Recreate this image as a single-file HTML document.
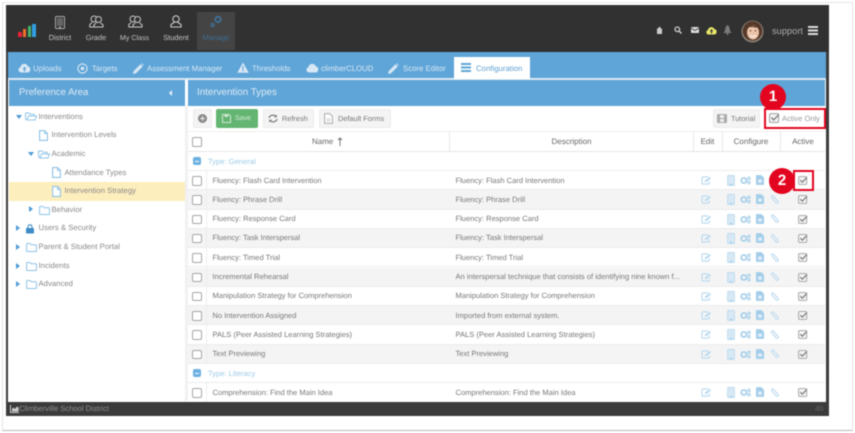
<!DOCTYPE html>
<html><head><meta charset="utf-8">
<style>
html,body{margin:0;padding:0;background:#fff}
body{width:855px;height:433px;position:relative;overflow:hidden;font-family:"Liberation Sans",sans-serif;text-rendering:geometricPrecision}
#wrap{position:absolute;left:0;top:0;width:855px;height:433px;filter:blur(.4px)}
.a,.t,svg.i{position:absolute}
.t{white-space:nowrap;font-size:7.55px;color:#777;line-height:12px}
.ctr{text-align:center}
.row{position:absolute;left:188px;width:637px;height:19.3px;box-sizing:border-box;border-bottom:1px solid #ececec}
.g{background:#f4f4f4}
.cb{position:absolute;width:7.5px;height:7.5px;border:1px solid #a5a5a5;border-radius:2px;background:#fff}
.nav{color:#c4c4c4;font-size:7.4px}
.tab{color:#d8e8f4;font-size:7.8px}
.tree{color:#8a8a8a;font-size:7.75px}
.th{color:#666;font-size:8px}
.bt{font-size:7.35px}
.btn{position:absolute;background:#f4f4f4;border:1px solid #ececec;border-radius:2px;box-sizing:border-box;top:109px;height:19px}
</style></head><body>
<svg width="0" height="0" style="position:absolute">
<defs>
<symbol id="edit" viewBox="0 0 12 10"><path d="M8 1H2a1 1 0 0 0-1 1v6a1 1 0 0 0 1 1h6a1 1 0 0 0 1-1V6" fill="none" stroke="#b8d9ef" stroke-width="1.2"/><path d="M4 7l.4-2L9.500 1l1.500 1.500L6 6.600z" fill="#b8d9ef"/></symbol>
<symbol id="tab" viewBox="0 0 9 13"><rect x=".5" y=".5" width="8" height="12" rx="1" fill="#d8e9f5" stroke="#b8d9ef"/><rect x="3.500" y="10.500" width="2" height="1" fill="#7fb6dc"/></symbol>
<symbol id="cog" viewBox="0 0 13 10"><circle cx="4.500" cy="5" r="3" fill="none" stroke="#a3cde9" stroke-width="2"/><circle cx="10.500" cy="2.500" r="1.500" fill="none" stroke="#a3cde9" stroke-width="1.200"/><circle cx="10.500" cy="7.500" r="1.500" fill="none" stroke="#a3cde9" stroke-width="1.200"/></symbol>
<symbol id="doc" viewBox="0 0 9 11"><path d="M0 0h6l3 3v8H0z" fill="#a3cde9"/><rect x="2.500" y="5" width="4" height="3.500" fill="#e4f0f9"/></symbol>
<symbol id="clip" viewBox="0 0 10 11"><path d="M2 3l5 6a1.500 1.500 0 0 0 2-2L4 1.500A1 1 0 0 0 2 3" fill="none" stroke="#c6dff1" stroke-width="1.500"/></symbol>
<symbol id="chk" viewBox="0 0 11 10"><rect x=".6" y=".6" width="9" height="8.800" rx="1.200" fill="#f4f4f4" stroke="#a0a0a0" stroke-width="1"/><path d="M2.500 4.500l2.200 2.400L9.800 1.600" fill="none" stroke="#7c7c7c" stroke-width="1.300"/></symbol>
<symbol id="file" viewBox="0 0 9 11"><path d="M.6.6h5l2.800 2.800v7H.6z" fill="#fff" stroke="#8fc3e6" stroke-width="1.100"/><path d="M5.500.6v3h3" fill="none" stroke="#8fc3e6" stroke-width=".9"/></symbol>
<symbol id="open" viewBox="0 0 12 9"><path d="M2 8L.6 7V1h3.500l1 1.300h4V4M2 8l1.500-4h8L10 8z" fill="#fff" stroke="#8fc3e6" stroke-width="1"/></symbol>
<symbol id="fold" viewBox="0 0 11 9"><path d="M.6 1a.5.5 0 0 1 .5-.5h3l1 1.300h4.800a.5.5 0 0 1 .5.5V8a.5.5 0 0 1-.5.5H1.100a.5.5 0 0 1-.5-.5z" fill="#fff" stroke="#8fc3e6" stroke-width="1"/></symbol>
<symbol id="mem" viewBox="0 0 14 13"><circle cx="7" cy="4" r="3.200" fill="none" stroke="#c9c9c9" stroke-width="1.100"/><path d="M5.600 7L2 9.500V12h10V9.500L8.400 7" fill="none" stroke="#c9c9c9" stroke-width="1.100"/></symbol>
<symbol id="grp" viewBox="0 0 15 13"><circle cx="5" cy="4" r="3" fill="none" stroke="#c9c9c9"/><circle cx="9.500" cy="4.500" r="3" fill="#333" stroke="#c9c9c9"/><path d="M3 7.500L.8 9.500V12h6M7.500 8l-2.500 1.800V12h9V9.800L11.500 8" fill="none" stroke="#c9c9c9"/></symbol>
<symbol id="pen" viewBox="0 0 11 11"><path d="M0 11l.8-3L7.500 1.300l2.200 2.200L3 10.200zM8.200.6l.6-.5 2 2-.5.7z" fill="#d8e8f4"/></symbol>
</defs></svg>

<div id="wrap">
<div class="a" style="left:2px;top:2px;width:851px;height:429px;background:#fff;border:1px solid #e4e4e4;border-bottom:1px solid #bbb;box-sizing:border-box"></div>
<div class="a" style="left:6px;top:5px;width:823px;height:411px;background:#3b3b3b"></div>
<div class="a" style="left:8px;top:52px;width:818px;height:350px;background:#fff"></div>

<!-- header -->
<div class="a" style="left:6px;top:5px;width:823px;height:47px;background:#313131"></div>
<div class="a" style="left:197px;top:12px;width:38px;height:38px;background:#444"></div>
<div class="a" style="left:18px;top:32px;width:3.500px;height:5px;background:#e8203a"></div>
<div class="a" style="left:22.500px;top:29px;width:3.500px;height:8px;background:#f0702a"></div>
<div class="a" style="left:27.500px;top:26px;width:3.500px;height:11px;background:#45b36a"></div>
<div class="a" style="left:32px;top:23.500px;width:3.500px;height:13.500px;background:#2f9fe0"></div>

<svg class="i" style="left:55px;top:16px" width="10" height="13" viewBox="0 0 10 13"><rect x=".5" y=".5" width="9" height="12" rx="1" fill="none" stroke="#aaa"/><rect x="2" y="2" width="6" height="8" fill="#666"/><rect x="4" y="10.800" width="2" height="1" fill="#ccc"/></svg>
<svg class="i" style="left:89px;top:15px" width="15" height="13"><use href="#grp"/></svg>
<svg class="i" style="left:128px;top:15px" width="15" height="13"><use href="#grp"/></svg>
<svg class="i" style="left:169px;top:15px" width="14" height="13"><use href="#mem"/></svg>
<svg class="i" style="left:209px;top:15px" width="14" height="13" viewBox="0 0 14 13"><circle cx="9" cy="4.500" r="2.700" fill="none" stroke="#3d7199" stroke-width="1.800"/><circle cx="3.500" cy="10" r="1.500" fill="none" stroke="#3d7199" stroke-width="1.300"/></svg>
<div class="t nav ctr" style="left:40px;top:31.500px;width:40px">District</div>
<div class="t nav ctr" style="left:76px;top:31.500px;width:40px">Grade</div>
<div class="t nav ctr" style="left:114.500px;top:31.500px;width:40px;font-size:7.1px">My Class</div>
<div class="t nav ctr" style="left:156px;top:31.500px;width:40px">Student</div>
<div class="t nav ctr" style="left:196px;top:31.500px;width:40px;color:#3d6e94">Manage</div>

<svg class="i" style="left:656px;top:26px" width="7" height="8" viewBox="0 0 7 8"><path d="M1 2.500h5V8H1zM2.500 2.500V1h2v1.500" fill="#ccc"/></svg>
<svg class="i" style="left:674px;top:26px" width="8" height="8" viewBox="0 0 8 8"><circle cx="3.300" cy="3.300" r="2.300" fill="none" stroke="#ccc" stroke-width="1.300"/><path d="M5 5l2.500 2.500" stroke="#ccc" stroke-width="1.500"/></svg>
<svg class="i" style="left:691px;top:27px" width="8" height="6" viewBox="0 0 8 6"><rect width="8" height="6" rx=".8" fill="#ddd"/><path d="M0 1l4 2.500L8 1" fill="none" stroke="#333" stroke-width=".8"/></svg>
<svg class="i" style="left:706px;top:26px" width="11" height="9" viewBox="0 0 11 9"><path d="M2.500 8.500A2.300 2.300 0 0 1 2 4 3.300 3.300 0 0 1 8.200 3 2.800 2.800 0 0 1 8.500 8.500z" fill="#e8e86a"/><path d="M5.500 3L3.800 5.200h1.100v2.300h1.200V5.200h1.100z" fill="#333"/></svg>
<svg class="i" style="left:723px;top:25px" width="9" height="10" viewBox="0 0 9 10"><path d="M4.500 0C3 1 2.500 2 2.300 4 2 6 1.500 7 .3 8h8.400C7.500 7 7 6 6.700 4 6.500 2 6 1 4.500 0z" fill="#7a7a7a"/><circle cx="4.500" cy="9" r="1" fill="#7a7a7a"/></svg>
<svg class="i" style="left:741px;top:19.500px" width="23" height="23" viewBox="0 0 23 23"><circle cx="11.500" cy="11.500" r="11" fill="#8b8378"/><circle cx="11.500" cy="11" r="9.800" fill="#57392a"/><ellipse cx="12" cy="12.500" rx="6" ry="7" fill="#ecc4aa"/><path d="M6 8c3-3 8-3 12 0-2-1-3 0-6-1-2 0-4 0-6 1z" fill="#57392a"/><path d="M9 15.500c2 1.500 4 1.500 6 0" fill="none" stroke="#fbf2ec" stroke-width="1.200"/><circle cx="9.500" cy="10.800" r=".7" fill="#4a3328"/><circle cx="14.500" cy="10.800" r=".7" fill="#4a3328"/></svg>
<div class="t" style="left:772px;top:25px;font-size:9.300px;color:#aaa">support</div>
<div class="a" style="left:808px;top:26px;width:10px;height:2px;background:#ddd;box-shadow:0 3.500px 0 #ddd,0 7px 0 #ddd"></div>

<!-- tab strip -->
<div class="a" style="left:8px;top:52px;width:818px;height:27px;background:#5fa5d8"></div>
<div class="a" style="left:8px;top:78px;width:818px;height:1.500px;background:#dbe9f4"></div>
<svg class="i" style="left:18px;top:63px" width="13" height="10" viewBox="0 0 13 10"><path d="M3 9.500A2.700 2.700 0 0 1 2.500 4.200 3.800 3.800 0 0 1 9.800 3.300 3.200 3.200 0 0 1 10 9.500z" fill="#d8e8f4"/><path d="M6.500 3.500L4.500 6h1.300v2.500h1.400V6h1.300z" fill="#5fa5d8"/></svg>
<div class="t tab" style="left:33px;top:62.500px">Uploads</div>
<svg class="i" style="left:77px;top:63px" width="11" height="11" viewBox="0 0 11 11"><circle cx="5.500" cy="5.500" r="4.600" fill="none" stroke="#d8e8f4" stroke-width="1.100"/><circle cx="5.500" cy="5.500" r="1.800" fill="#d8e8f4"/></svg>
<div class="t tab" style="left:92px;top:62.500px">Targets</div>
<svg class="i" style="left:133px;top:63px" width="11" height="11"><use href="#pen"/></svg>
<div class="t tab" style="left:147px;top:62.500px">Assessment Manager</div>
<svg class="i" style="left:237px;top:62px" width="12" height="11" viewBox="0 0 12 11"><path d="M6 .5L11.700 10.700H.3z" fill="#d8e8f4"/><path d="M5.400 4h1.200v3.500H5.400zM5.400 8h1.200v1.300H5.400z" fill="#5fa5d8"/></svg>
<div class="t tab" style="left:252px;top:62.500px">Thresholds</div>
<svg class="i" style="left:306px;top:63px" width="13" height="10" viewBox="0 0 13 10"><path d="M3 9.500A2.700 2.700 0 0 1 2.500 4.200 3.800 3.800 0 0 1 9.800 3.300 3.200 3.200 0 0 1 10 9.500z" fill="#d8e8f4"/></svg>
<div class="t tab" style="left:321px;top:62.500px">climberCLOUD</div>
<svg class="i" style="left:388px;top:63px" width="11" height="11"><use href="#pen"/></svg>
<div class="t tab" style="left:403px;top:62.500px">Score Editor</div>
<div class="a" style="left:454px;top:57px;width:76px;height:22px;background:#fff"></div>
<div class="a" style="left:461px;top:63px;width:10px;height:1.800px;background:#5fa5d8;box-shadow:0 3.500px 0 #5fa5d8,0 7px 0 #5fa5d8"></div>
<div class="t" style="left:476px;top:62.500px;font-size:7.800px;color:#5f9fcf">Configuration</div>

<!-- left panel -->
<div class="a" style="left:9px;top:80px;width:176px;height:26px;background:#5fa5d8"></div>
<div class="t" style="left:19px;top:87px;font-size:9.600px;color:#deebf5">Preference Area</div>
<div class="a" style="left:169px;top:90px;width:0;height:0;border:3.500px solid transparent;border-right:3.500px solid #eaf2f9;border-left:0"></div>
<div class="a" style="left:185px;top:106px;width:3px;height:295px;background:#f1f1f1"></div>

<div class="a" style="left:9px;top:182px;width:176px;height:19px;background:#fdeebd"></div>

<div class="a" style="left:16px;top:115px;border:3.500px solid transparent;border-top:4px solid #4d9bd6;border-bottom:0"></div>
<svg class="i" style="left:25px;top:112px" width="12" height="9"><use href="#open"/></svg>
<div class="t tree" style="left:38.500px;top:110.500px">Interventions</div>
<svg class="i" style="left:39px;top:130px" width="9" height="11"><use href="#file"/></svg>
<div class="t tree" style="left:51.500px;top:129px">Intervention Levels</div>
<div class="a" style="left:28px;top:152px;border:3.500px solid transparent;border-top:4px solid #4d9bd6;border-bottom:0"></div>
<svg class="i" style="left:38px;top:149.500px" width="12" height="9"><use href="#open"/></svg>
<div class="t tree" style="left:51.500px;top:147.500px">Academic</div>
<svg class="i" style="left:52px;top:167px" width="9" height="11"><use href="#file"/></svg>
<div class="t tree" style="left:64.500px;top:166.500px">Attendance Types</div>
<svg class="i" style="left:52px;top:186px" width="9" height="11"><use href="#file"/></svg>
<div class="t tree" style="left:64.500px;top:185px">Intervention Strategy</div>
<div class="a" style="left:29px;top:206px;border:3.500px solid transparent;border-left:4px solid #4d9bd6;border-right:0"></div>
<svg class="i" style="left:38.500px;top:205.500px" width="11" height="9"><use href="#fold"/></svg>
<div class="t tree" style="left:51.500px;top:203.500px">Behavior</div>
<div class="a" style="left:16px;top:225px;border:3.500px solid transparent;border-left:4px solid #4d9bd6;border-right:0"></div>
<svg class="i" style="left:26px;top:223.500px" width="8" height="10" viewBox="0 0 8 10"><path d="M2 4V2.800a2 2 0 0 1 4 0V4" fill="none" stroke="#3e8cc6" stroke-width="1.100"/><rect y="4" width="8" height="5.500" rx=".8" fill="#3e8cc6"/></svg>
<div class="t tree" style="left:38.500px;top:222px">Users &amp; Security</div>
<div class="a" style="left:16px;top:244px;border:3.500px solid transparent;border-left:4px solid #4d9bd6;border-right:0"></div>
<svg class="i" style="left:25.500px;top:243px" width="11" height="9"><use href="#fold"/></svg>
<div class="t tree" style="left:38.500px;top:241px">Parent &amp; Student Portal</div>
<div class="a" style="left:16px;top:263px;border:3.500px solid transparent;border-left:4px solid #4d9bd6;border-right:0"></div>
<svg class="i" style="left:25.500px;top:261.500px" width="11" height="9"><use href="#fold"/></svg>
<div class="t tree" style="left:38.500px;top:259.500px">Incidents</div>
<div class="a" style="left:16px;top:281px;border:3.500px solid transparent;border-left:4px solid #4d9bd6;border-right:0"></div>
<svg class="i" style="left:25.500px;top:280px" width="11" height="9"><use href="#fold"/></svg>
<div class="t tree" style="left:38.500px;top:278px">Advanced</div>

<!-- right panel -->
<div class="a" style="left:188px;top:80px;width:637px;height:26px;background:#5fa5d8"></div>
<div class="t" style="left:197px;top:87px;font-size:9.800px;color:#deebf5">Intervention Types</div>

<div class="btn" style="left:193px;width:19px"></div>
<div class="a" style="left:198px;top:114px;width:9px;height:9px;border-radius:50%;background:#888"></div>
<div class="a" style="left:200px;top:118px;width:5px;height:1.200px;background:#eee"></div>
<div class="a" style="left:202px;top:116px;width:1.200px;height:5px;background:#eee"></div>
<div class="a" style="left:216px;top:109px;width:42px;height:19px;background:#63b571;border-radius:2px"></div>
<svg class="i" style="left:222px;top:114px" width="9" height="9" viewBox="0 0 9 9"><path d="M.5.500h6.500l1.500 1.500v6.500h-8z" fill="none" stroke="#cfe9d3"/><rect x="2.500" y=".8" width="3.500" height="2.200" fill="#cfe9d3"/></svg>
<div class="t bt" style="left:235px;top:112.500px;color:#d5ecd8;font-size:7px">Save</div>
<div class="btn" style="left:263px;width:51px"></div>
<svg class="i" style="left:268px;top:114px" width="10" height="9" viewBox="0 0 10 9"><path d="M1 4a4 3.600 0 0 1 7-1.500M9 5a4 3.600 0 0 1-7 1.500" fill="none" stroke="#777" stroke-width="1.200"/><path d="M8.800.5v2.800H6zM1.200 8.500V5.700H4z" fill="#777"/></svg>
<div class="t bt" style="left:282px;top:112.500px">Refresh</div>
<div class="btn" style="left:319px;width:72px"></div>
<svg class="i" style="left:324px;top:113px" width="9" height="11" viewBox="0 0 9 11"><path d="M.6.6h5l2.800 2.800v7H.6z" fill="#fff" stroke="#aaa" stroke-width="1"/><path d="M2.500 6h4M2.500 8h4" stroke="#bbb" stroke-width=".8"/></svg>
<div class="t bt" style="left:338px;top:112.500px">Default Forms</div>
<div class="btn" style="left:713px;width:47px"></div>
<svg class="i" style="left:717px;top:114px" width="10" height="9" viewBox="0 0 10 9"><rect width="10" height="9" rx="1" fill="#aaa"/><rect x="3" y="1" width="4" height="3" fill="#eee"/><rect x="3" y="5" width="4" height="3" fill="#eee"/></svg>
<div class="t bt" style="left:731px;top:112.500px">Tutorial</div>
<svg class="i" style="left:769px;top:113px" width="11" height="10"><use href="#chk"/></svg>
<div class="t" style="left:782px;top:112.500px;font-size:7.500px;color:#999">Active Only</div>

<!-- table header -->
<div class="a" style="left:188px;top:131px;width:637px;height:1px;background:#eee"></div>
<div class="a" style="left:188px;top:150.500px;width:637px;height:1.500px;background:#e6e6e6"></div>
<div class="a" style="left:449px;top:132px;width:1px;height:19px;background:#e8e8e8"></div>
<div class="a" style="left:693px;top:132px;width:1px;height:19px;background:#e8e8e8"></div>
<div class="a" style="left:722px;top:132px;width:1px;height:19px;background:#e8e8e8"></div>
<div class="a" style="left:780px;top:132px;width:1px;height:19px;background:#e8e8e8"></div>
<div class="cb" style="left:192px;top:137px"></div>
<div class="t th" style="left:312px;top:135.500px">Name</div>
<svg class="i" style="left:337px;top:137px" width="6" height="9" viewBox="0 0 6 9"><path d="M3 9V1M1 3l2-2 2 2" fill="none" stroke="#777"/></svg>
<div class="t th ctr" style="left:450px;top:135.500px;width:243px">Description</div>
<div class="t th ctr" style="left:693px;top:135.500px;width:29px">Edit</div>
<div class="t th ctr" style="left:722px;top:135.500px;width:58px">Configure</div>
<div class="t th ctr" style="left:781px;top:135.500px;width:44px">Active</div>

<!-- rows -->
<div class="a" style="left:188px;top:152px;width:637px;height:249.500px;overflow:hidden">
<div style="position:absolute;left:-188px;top:-152px;width:855px;height:433px">

<div class="row" style="top:152px;height:19px"></div>
<div class="a" style="left:193px;top:157px;width:8px;height:8px;background:#6db0e2;border-radius:2px"></div>
<div class="a" style="left:195px;top:160.500px;width:4px;height:1.200px;background:#fff"></div>
<div class="t" style="left:208px;top:155.500px;color:#9ecbea;font-size:7.600px">Type: General</div>

<div class="row" style="top:171px"></div>
<div class="row g" style="top:190.300px"></div>
<div class="row" style="top:209.600px"></div>
<div class="row g" style="top:228.900px"></div>
<div class="row" style="top:248.200px"></div>
<div class="row g" style="top:267.500px"></div>
<div class="row" style="top:286.800px"></div>
<div class="row g" style="top:306.100px"></div>
<div class="row" style="top:325.400px"></div>
<div class="row g" style="top:344.700px"></div>
<div class="row" style="top:364px"></div>
<div class="row" style="top:383.300px;border-bottom:0"></div>
<div class="a" style="left:206px;top:171px;width:1px;height:193px;background:#eee"></div>
<div class="a" style="left:206px;top:383px;width:1px;height:19px;background:#eee"></div>

<div class="a" style="left:193px;top:369px;width:8px;height:8px;background:#6db0e2;border-radius:2px"></div>
<div class="a" style="left:195px;top:372.500px;width:4px;height:1.200px;background:#fff"></div>
<div class="t" style="left:208px;top:367.500px;color:#9ecbea;font-size:7.600px">Type: Literacy</div>

<div class="cb" style="left:192px;top:176px"></div><div class="t" style="left:212.500px;top:174.500px">Fluency: Flash Card Intervention</div><div class="t" style="left:455.500px;top:174.500px">Fluency: Flash Card Intervention</div>
<div class="cb" style="left:192px;top:195.300px"></div><div class="t" style="left:212.500px;top:193.800px">Fluency: Phrase Drill</div><div class="t" style="left:455.500px;top:193.800px">Fluency: Phrase Drill</div>
<div class="cb" style="left:192px;top:214.600px"></div><div class="t" style="left:212.500px;top:213.100px">Fluency: Response Card</div><div class="t" style="left:455.500px;top:213.100px">Fluency: Response Card</div>
<div class="cb" style="left:192px;top:233.900px"></div><div class="t" style="left:212.500px;top:232.400px">Fluency: Task Interspersal</div><div class="t" style="left:455.500px;top:232.400px">Fluency: Task Interspersal</div>
<div class="cb" style="left:192px;top:253.200px"></div><div class="t" style="left:212.500px;top:251.700px">Fluency: Timed Trial</div><div class="t" style="left:455.500px;top:251.700px">Fluency: Timed Trial</div>
<div class="cb" style="left:192px;top:272.500px"></div><div class="t" style="left:212.500px;top:271px">Incremental Rehearsal</div><div class="t" style="left:455.500px;top:271px">An interspersal technique that consists of identifying nine known f...</div>
<div class="cb" style="left:192px;top:291.800px"></div><div class="t" style="left:212.500px;top:290.300px">Manipulation Strategy for Comprehension</div><div class="t" style="left:455.500px;top:290.300px">Manipulation Strategy for Comprehension</div>
<div class="cb" style="left:192px;top:311.100px"></div><div class="t" style="left:212.500px;top:309.600px">No Intervention Assigned</div><div class="t" style="left:455.500px;top:309.600px">Imported from external system.</div>
<div class="cb" style="left:192px;top:330.400px"></div><div class="t" style="left:212.500px;top:328.900px">PALS (Peer Assisted Learning Strategies)</div><div class="t" style="left:455.500px;top:328.900px">PALS (Peer Assisted Learning Strategies)</div>
<div class="cb" style="left:192px;top:349.700px"></div><div class="t" style="left:212.500px;top:348.200px">Text Previewing</div><div class="t" style="left:455.500px;top:348.200px">Text Previewing</div>
<div class="cb" style="left:192px;top:388.300px"></div><div class="t" style="left:212.500px;top:386.800px">Comprehension: Find the Main Idea</div><div class="t" style="left:455.500px;top:386.800px">Comprehension: Find the Main Idea</div>

<svg class="i" style="left:701px;top:176px" width="11" height="9"><use href="#edit"/></svg><svg class="i" style="left:727px;top:175px" width="8" height="11"><use href="#tab"/></svg><svg class="i" style="left:740px;top:176px" width="11" height="9"><use href="#cog"/></svg><svg class="i" style="left:756px;top:175px" width="8" height="10"><use href="#doc"/></svg><svg class="i" style="left:798px;top:176px" width="10" height="9"><use href="#chk"/></svg>
<svg class="i" style="left:701px;top:195.300px" width="11" height="9"><use href="#edit"/></svg><svg class="i" style="left:727px;top:194.300px" width="8" height="11"><use href="#tab"/></svg><svg class="i" style="left:740px;top:195.300px" width="11" height="9"><use href="#cog"/></svg><svg class="i" style="left:756px;top:194.300px" width="8" height="10"><use href="#doc"/></svg><svg class="i" style="left:770px;top:195px" width="9" height="10"><use href="#clip"/></svg><svg class="i" style="left:798px;top:195.300px" width="10" height="9"><use href="#chk"/></svg>
<svg class="i" style="left:701px;top:214.600px" width="11" height="9"><use href="#edit"/></svg><svg class="i" style="left:727px;top:213.600px" width="8" height="11"><use href="#tab"/></svg><svg class="i" style="left:740px;top:214.600px" width="11" height="9"><use href="#cog"/></svg><svg class="i" style="left:756px;top:213.600px" width="8" height="10"><use href="#doc"/></svg><svg class="i" style="left:770px;top:214.300px" width="9" height="10"><use href="#clip"/></svg><svg class="i" style="left:798px;top:214.600px" width="10" height="9"><use href="#chk"/></svg>
<svg class="i" style="left:701px;top:233.900px" width="11" height="9"><use href="#edit"/></svg><svg class="i" style="left:727px;top:232.900px" width="8" height="11"><use href="#tab"/></svg><svg class="i" style="left:740px;top:233.900px" width="11" height="9"><use href="#cog"/></svg><svg class="i" style="left:756px;top:232.900px" width="8" height="10"><use href="#doc"/></svg><svg class="i" style="left:770px;top:233.600px" width="9" height="10"><use href="#clip"/></svg><svg class="i" style="left:798px;top:233.900px" width="10" height="9"><use href="#chk"/></svg>
<svg class="i" style="left:701px;top:253.200px" width="11" height="9"><use href="#edit"/></svg><svg class="i" style="left:727px;top:252.200px" width="8" height="11"><use href="#tab"/></svg><svg class="i" style="left:740px;top:253.200px" width="11" height="9"><use href="#cog"/></svg><svg class="i" style="left:756px;top:252.200px" width="8" height="10"><use href="#doc"/></svg><svg class="i" style="left:770px;top:252.900px" width="9" height="10"><use href="#clip"/></svg><svg class="i" style="left:798px;top:253.200px" width="10" height="9"><use href="#chk"/></svg>
<svg class="i" style="left:701px;top:272.500px" width="11" height="9"><use href="#edit"/></svg><svg class="i" style="left:727px;top:271.500px" width="8" height="11"><use href="#tab"/></svg><svg class="i" style="left:740px;top:272.500px" width="11" height="9"><use href="#cog"/></svg><svg class="i" style="left:756px;top:271.500px" width="8" height="10"><use href="#doc"/></svg><svg class="i" style="left:770px;top:272.200px" width="9" height="10"><use href="#clip"/></svg><svg class="i" style="left:798px;top:272.500px" width="10" height="9"><use href="#chk"/></svg>
<svg class="i" style="left:701px;top:291.800px" width="11" height="9"><use href="#edit"/></svg><svg class="i" style="left:727px;top:290.800px" width="8" height="11"><use href="#tab"/></svg><svg class="i" style="left:740px;top:291.800px" width="11" height="9"><use href="#cog"/></svg><svg class="i" style="left:756px;top:290.800px" width="8" height="10"><use href="#doc"/></svg><svg class="i" style="left:770px;top:291.500px" width="9" height="10"><use href="#clip"/></svg><svg class="i" style="left:798px;top:291.800px" width="10" height="9"><use href="#chk"/></svg>
<svg class="i" style="left:701px;top:311.100px" width="11" height="9"><use href="#edit"/></svg><svg class="i" style="left:727px;top:310.100px" width="8" height="11"><use href="#tab"/></svg><svg class="i" style="left:740px;top:311.100px" width="11" height="9"><use href="#cog"/></svg><svg class="i" style="left:756px;top:310.100px" width="8" height="10"><use href="#doc"/></svg><svg class="i" style="left:770px;top:310.800px" width="9" height="10"><use href="#clip"/></svg><svg class="i" style="left:798px;top:311.100px" width="10" height="9"><use href="#chk"/></svg>
<svg class="i" style="left:701px;top:330.400px" width="11" height="9"><use href="#edit"/></svg><svg class="i" style="left:727px;top:329.400px" width="8" height="11"><use href="#tab"/></svg><svg class="i" style="left:740px;top:330.400px" width="11" height="9"><use href="#cog"/></svg><svg class="i" style="left:756px;top:329.400px" width="8" height="10"><use href="#doc"/></svg><svg class="i" style="left:770px;top:330.100px" width="9" height="10"><use href="#clip"/></svg><svg class="i" style="left:798px;top:330.400px" width="10" height="9"><use href="#chk"/></svg>
<svg class="i" style="left:701px;top:349.700px" width="11" height="9"><use href="#edit"/></svg><svg class="i" style="left:727px;top:348.700px" width="8" height="11"><use href="#tab"/></svg><svg class="i" style="left:740px;top:349.700px" width="11" height="9"><use href="#cog"/></svg><svg class="i" style="left:756px;top:348.700px" width="8" height="10"><use href="#doc"/></svg><svg class="i" style="left:770px;top:349.400px" width="9" height="10"><use href="#clip"/></svg><svg class="i" style="left:798px;top:349.700px" width="10" height="9"><use href="#chk"/></svg>
<svg class="i" style="left:701px;top:388.300px" width="11" height="9"><use href="#edit"/></svg><svg class="i" style="left:727px;top:387.300px" width="8" height="11"><use href="#tab"/></svg><svg class="i" style="left:740px;top:388.300px" width="11" height="9"><use href="#cog"/></svg><svg class="i" style="left:756px;top:387.300px" width="8" height="10"><use href="#doc"/></svg><svg class="i" style="left:770px;top:388px" width="9" height="10"><use href="#clip"/></svg><svg class="i" style="left:798px;top:388.300px" width="10" height="9"><use href="#chk"/></svg>
</div></div>

<!-- footer -->
<div class="a" style="left:7px;top:402px;width:822px;height:14px;background:#3b3b3b"></div>
<svg class="i" style="left:10px;top:405px" width="9" height="8" viewBox="0 0 9 8"><path d="M0 8V0h1v7h8v1zM2 6.500V4l1.500-1.500L5 4l2-2.500 1.500 1v4z" fill="#ccc"/></svg>
<div class="t" style="left:19px;top:403px;font-size:7.600px;color:#8f8f8f">Climberville School District</div>
<div class="t" style="left:815px;top:403px;font-size:7.500px;color:#666">40</div>

<!-- annotations -->
<div class="a" style="left:764px;top:108px;width:62px;height:21px;box-sizing:border-box;border:2.500px solid #e3051f"></div>
<div class="a" style="left:760px;top:84px;width:26px;height:26px;border-radius:50%;background:#e3051f;color:#fff;font-weight:bold;font-size:15px;line-height:26px;text-align:center">1</div>
<div class="a" style="left:793px;top:170px;width:21px;height:21px;box-sizing:border-box;border:2.500px solid #e3051f"></div>
<div class="a" style="left:769px;top:168px;width:26px;height:26px;border-radius:50%;background:#e3051f;color:#fff;font-weight:bold;font-size:15px;line-height:26px;text-align:center">2</div>
</div>
</body></html>
